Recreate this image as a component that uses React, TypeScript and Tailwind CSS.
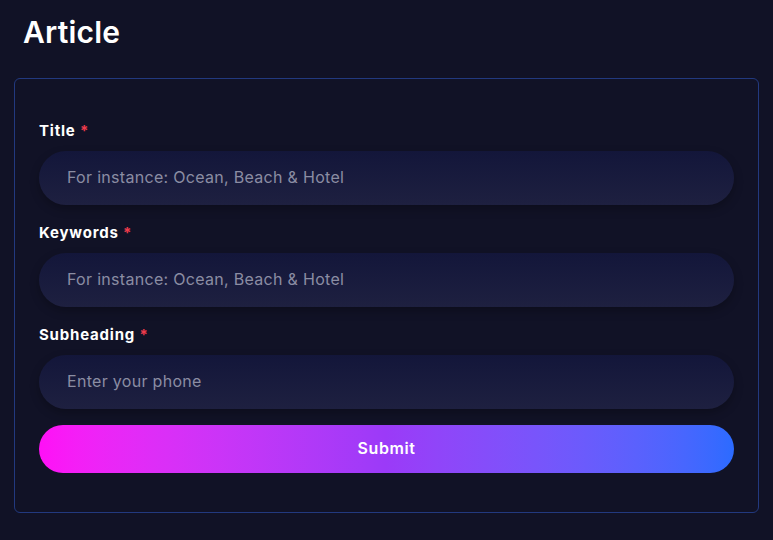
import { useState } from "react";

type Field = {
  name: string;
  label: string;
  placeholder: string;
};

const FIELDS: Field[] = [
  { name: "title", label: "Title", placeholder: "For instance: Ocean, Beach & Hotel" },
  { name: "keywords", label: "Keywords", placeholder: "For instance: Ocean, Beach & Hotel" },
  { name: "subheading", label: "Subheading", placeholder: "Enter your phone" },
];

export default function App() {
  const [values, setValues] = useState<Record<string, string>>({});

  return (
    <div className="min-h-[540px] bg-[#111226] px-[14px] pt-[12px] font-['Inter','Liberation_Sans',sans-serif]">
      <h1 className="pl-[9px] text-[30px] font-semibold leading-[40px] tracking-[0.2px] text-white">Article</h1>
      <form
        className="mt-[26px] flex flex-col gap-4 rounded-md border border-[#22397f] px-6 pb-[39px] pt-10"
        onSubmit={(event) => event.preventDefault()}
      >
        {FIELDS.map((field) => (
          <label className="flex flex-col gap-[9px]" key={field.name}>
            <span className="pt-px text-[15px] font-bold leading-[22px] tracking-[0.8px] text-white">
              {field.label} <span className="text-[#ef3b4c]">*</span>
            </span>
            <input
              className="h-[54px] w-full rounded-full bg-gradient-to-b from-[#13163a] to-[#1e2040] px-7 pb-0.5 text-base tracking-[0.3px] text-[#e5e7f0] shadow-[0_4px_10px_rgba(0,0,0,0.25)] outline-none placeholder:text-[#8b8da3]"
              placeholder={field.placeholder}
              value={values[field.name] ?? ""}
              onChange={(event) => setValues({ ...values, [field.name]: event.target.value })}
            />
          </label>
        ))}
        <button
          className="h-12 w-full rounded-full bg-gradient-to-r from-[#ff0ff6] via-[#9b3af8] to-[#2b6bff] pb-0.5 text-base font-semibold tracking-[0.6px] text-white"
          type="submit"
        >
          Submit
        </button>
      </form>
    </div>
  );
}
